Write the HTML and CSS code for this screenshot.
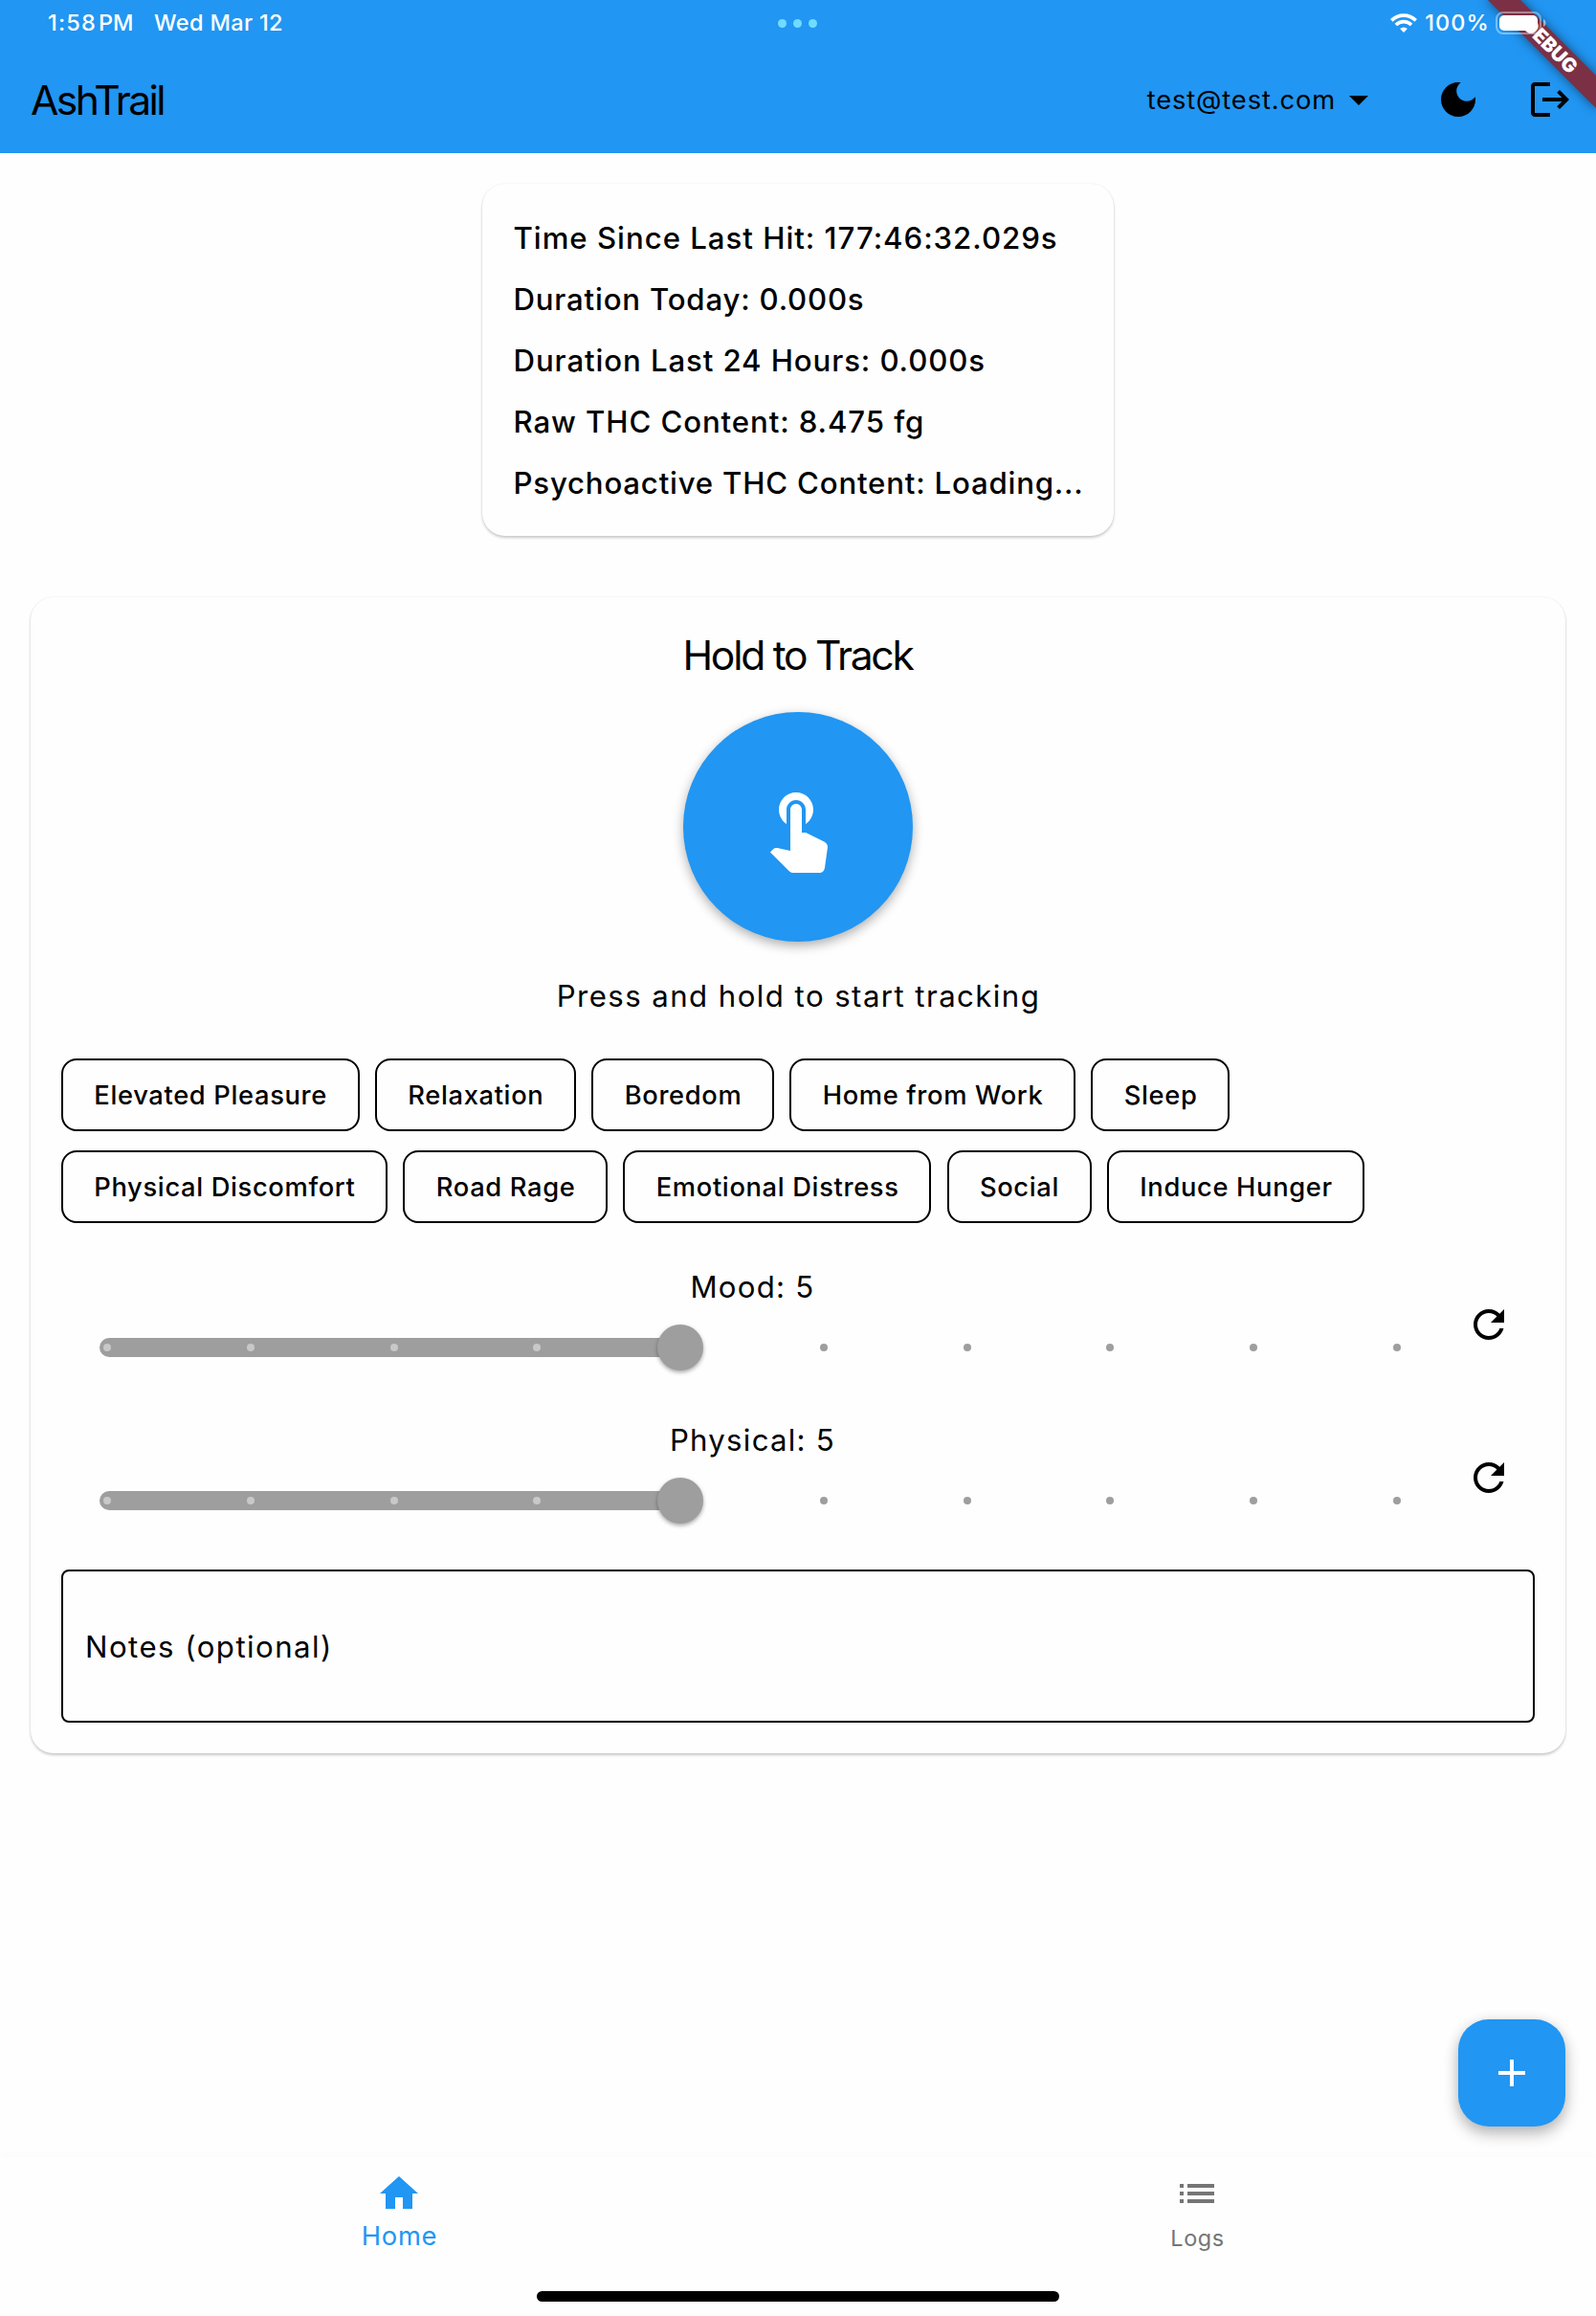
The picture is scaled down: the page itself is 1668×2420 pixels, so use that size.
FILE: index.html
```
<!DOCTYPE html>
<html lang="en">
<head>
<meta charset="utf-8">
<title>AshTrail</title>
<link rel="stylesheet" href="styles.css">
</head>
<body>
<header class="header">
  <div class="debug-banner">DEBUG</div>
  <div class="status">
    <div class="status-left"><span class="time">1:58</span><span class="meridiem">PM</span><span class="date">Wed Mar 12</span></div>
    <div class="dots"><i></i><i></i><i></i></div>
    <div class="status-right">
      <svg class="wifi" width="28" height="20" viewBox="0 0 28 20" fill="none" stroke="#fff" stroke-width="3.6">
        <path d="M1.3 7.4a18 18 0 0 1 25.4 0"/>
        <path d="M5.9 12a11.5 11.5 0 0 1 16.2 0"/>
        <path d="M14 20l-3.9-3.9a5.6 5.6 0 0 1 7.8 0z" fill="#fff" stroke="none"/>
      </svg>
      <span class="percent">100%</span>
      <svg width="53" height="24" viewBox="0 0 53 24">
        <rect x="1" y="1" width="46" height="22" rx="7" fill="none" stroke="#fff" stroke-opacity=".4" stroke-width="2"/>
        <rect x="4" y="4" width="40" height="16" rx="5" fill="#fff"/>
        <path d="M50 8c3.400 1.200 3.400 6.800 0 8z" fill="#fff" fill-opacity=".5"/>
      </svg>
    </div>
  </div>
  <div class="appbar">
    <h1 class="title">AshTrail</h1>
    <div class="account"><span>test@test.com</span><svg class="icon" viewBox="0 0 24 24"><path d="M7 10l5 5 5-5z"/></svg></div>
    <svg class="icon moon" viewBox="0 0 24 24"><path d="M12 3c-4.970 0-9 4.030-9 9s4.030 9 9 9 9-4.030 9-9c0-.46-.04-.92-.1-1.360-.98 1.370-2.580 2.260-4.400 2.260-2.980 0-5.400-2.420-5.400-5.400 0-1.810.89-3.420 2.260-4.400C12.920 3.040 12.460 3 12 3z"/></svg>
    <svg class="icon logout" viewBox="0 0 24 24"><path d="M17 7l-1.410 1.410L18.170 11H8v2h10.170l-2.580 2.580L17 17l5-5zM4 5h8V3H4c-1.100 0-2 .9-2 2v14c0 1.100.9 2 2 2h8v-2H4V5z"/></svg>
  </div>
</header>

<main class="content">
  <section class="card stats">
    <p class="stat-wide">Time Since Last Hit: 177:46:32.029s</p>
    <p>Duration Today: 0.000s</p>
    <p class="stat-mid">Duration Last 24 Hours: 0.000s</p>
    <p class="stat-mid">Raw THC Content: 8.475 fg</p>
    <p>Psychoactive THC Content: Loading...</p>
  </section>

  <section class="card tracker">
    <h2 class="tracker-title">Hold to Track</h2>
    <button class="hold" type="button" aria-label="Hold to track">
      <svg width="96" height="96" viewBox="0 0 24 24" fill="#fff"><path d="M9 11.240V7.500C9 6.120 10.120 5 11.500 5S14 6.120 14 7.500v3.740c1.210-.81 2-2.180 2-3.740C16 5.010 13.990 3 11.500 3S7 5.010 7 7.500c0 1.560.79 2.930 2 3.740zm9.840 4.630l-4.540-2.260c-.17-.07-.35-.11-.54-.11H13v-6c0-.83-.67-1.500-1.500-1.500S10 6.670 10 7.500v10.740l-3.430-.72c-.08-.01-.15-.03-.24-.03-.31 0-.59.13-.79.33l-.79.8 4.940 4.940c.27.27.65.44 1.060.44h6.790c.75 0 1.330-.55 1.440-1.280l.75-5.270c.01-.07.02-.14.02-.2 0-.62-.38-1.160-.91-1.380z"/></svg>
    </button>
    <p class="hint">Press and hold to start tracking</p>

    <div class="chips">
      <div class="chip-row">
        <span class="chip">Elevated Pleasure</span><span class="chip">Relaxation</span><span class="chip">Boredom</span><span class="chip">Home from Work</span><span class="chip">Sleep</span>
      </div>
      <div class="chip-row">
        <span class="chip">Physical Discomfort</span><span class="chip">Road Rage</span><span class="chip">Emotional Distress</span><span class="chip">Social</span><span class="chip">Induce Hunger</span>
      </div>
    </div>

    <div class="rating">
      <div class="rating-main">
        <p class="rating-label">Mood: 5</p>
        <div class="slider">
          <div class="track"></div>
          <div class="ticks"><i class="on"></i><i class="on"></i><i class="on"></i><i class="on"></i><i class="thumb"></i><i></i><i></i><i></i><i></i><i></i></div>
        </div>
      </div>
      <svg class="icon refresh" viewBox="0 0 24 24"><path d="M17.650 6.350C16.200 4.900 14.210 4 12 4c-4.420 0-7.990 3.580-7.990 8s3.570 8 7.990 8c3.730 0 6.840-2.550 7.730-6h-2.080c-.82 2.330-3.040 4-5.650 4-3.310 0-6-2.690-6-6s2.690-6 6-6c1.660 0 3.140.69 4.220 1.780L13 11h7V4l-2.350 2.350z"/></svg>
    </div>
    <div class="rating">
      <div class="rating-main">
        <p class="rating-label">Physical: 5</p>
        <div class="slider">
          <div class="track"></div>
          <div class="ticks"><i class="on"></i><i class="on"></i><i class="on"></i><i class="on"></i><i class="thumb"></i><i></i><i></i><i></i><i></i><i></i></div>
        </div>
      </div>
      <svg class="icon refresh" viewBox="0 0 24 24"><path d="M17.650 6.350C16.200 4.900 14.210 4 12 4c-4.420 0-7.990 3.580-7.990 8s3.570 8 7.990 8c3.730 0 6.840-2.550 7.730-6h-2.080c-.82 2.330-3.040 4-5.650 4-3.310 0-6-2.690-6-6s2.690-6 6-6c1.660 0 3.140.69 4.220 1.780L13 11h7V4l-2.350 2.350z"/></svg>
    </div>

    <div class="notes">Notes (optional)</div>
  </section>
</main>

<button class="fab" type="button" aria-label="Add">
  <svg class="icon" viewBox="0 0 24 24"><path d="M19 13h-6v6h-2v-6H5v-2h6V5h2v6h6z"/></svg>
</button>

<nav class="nav">
  <div class="tabs">
    <div class="tab active"><svg class="icon" viewBox="0 0 24 24"><path d="M10 20v-6h4v6h5v-8h3L12 3 2 12h3v8z"/></svg><span>Home</span></div>
    <div class="tab"><svg class="icon" viewBox="0 0 24 24"><path d="M3 13h2v-2H3v2zm0 4h2v-2H3v2zm0-8h2V7H3v2zm4 4h14v-2H7v2zm0 4h14v-2H7v2zM7 7v2h14V7H7z"/></svg><span>Logs</span></div>
  </div>
  <div class="home-indicator"></div>
</nav>
</body>
</html>
```
FILE: styles.css
```
* { box-sizing: border-box; margin: 0; padding: 0; }

body {
  position: relative;
  display: flex;
  flex-direction: column;
  width: 1668px;
  height: 2420px;
  overflow: hidden;
  background: #fefefe;
  color: #000;
  font-family: Inter, Roboto, "Liberation Sans", sans-serif;
}

button { border: 0; font: inherit; }
svg { display: block; flex: none; }
.icon { width: 48px; height: 48px; fill: currentColor; }

/* Header */
.header {
  position: relative;
  flex: none;
  height: 160px;
  overflow: hidden;
  background: #2196f3;
}
.status {
  position: relative;
  display: grid;
  grid-template-columns: 1fr auto 1fr;
  align-items: center;
  height: 48px;
  padding: 0 52px 0 50px;
  color: #fff;
  font-size: 23.5px;
  font-weight: 480;
}
.status-left, .status-right { display: flex; align-items: center; }
.status-left span, .percent { margin-top: -1px; }
.status-right { justify-content: flex-end; }
.time { letter-spacing: 1.2px; }
.meridiem { margin-left: 2px; }
.date { margin-left: 21.5px; letter-spacing: .35px; }
.dots { display: flex; gap: 7px; }
.dots i { width: 9px; height: 9px; border-radius: 50%; background: #6fdcff; }
.wifi { margin-right: 8px; }
.percent { margin-right: 6px; letter-spacing: 1.1px; }

.appbar {
  display: flex;
  align-items: center;
  height: 112px;
  padding: 0 24px 0 32px;
}
.title { font-size: 42.6px; font-weight: 380; letter-spacing: -2.6px; }
.account {
  display: flex;
  align-items: center;
  margin-left: auto;
  font-size: 27.3px;
  letter-spacing: .88px;
}
.moon { margin-left: 56px; }
.logout { margin-left: 48px; }

.debug-banner {
  position: absolute;
  top: 36px;
  left: 1540px;
  width: 160px;
  height: 24px;
  transform: rotate(45deg);
  background: #7b3045;
  box-shadow: 0 0 12px rgba(0, 0, 0, .5);
  color: #fff;
  font-size: 20.4px;
  font-weight: 900;
  line-height: 24px;
  text-align: center;
}

/* Content */
.content {
  display: flex;
  flex-direction: column;
  gap: 64px;
  padding: 32px;
}
.card {
  padding: 32px;
  border-radius: 24px;
  background: #fefefe;
  box-shadow: 0 2px 3px rgba(0, 0, 0, .2), 0 0 2px rgba(0, 0, 0, .08);
}
.stats {
  display: flex;
  flex-direction: column;
  gap: 16px;
  align-self: center;
  width: 660px;
  padding: 33px 32px 31px 32.5px;
  font-size: 31.2px;
  font-weight: 470;
  line-height: 48px;
  letter-spacing: .8px;
  white-space: nowrap;
}
.stat-wide { letter-spacing: .98px; }
.stat-mid { letter-spacing: .9px; }

.tracker { display: flex; flex-direction: column; }
.tracker-title {
  height: 56px;
  padding: 1px 1px 0 0;
  font-size: 42.6px;
  font-weight: 380;
  line-height: 56px;
  letter-spacing: -2.25px;
  text-align: center;
}
.hold {
  display: flex;
  align-items: center;
  justify-content: center;
  align-self: center;
  width: 240px;
  height: 240px;
  margin: 32px 0;
  border-radius: 50%;
  background: #2196f3;
  box-shadow: 0 4px 12px rgba(0, 0, 0, .32);
}
.hint {
  height: 48px;
  padding: 1px 0 0 1px;
  font-size: 31.2px;
  line-height: 48px;
  letter-spacing: 1.43px;
  text-align: center;
}

.chips {
  display: flex;
  flex-direction: column;
  gap: 20px;
  margin: 42px 0;
}
.chip-row { display: flex; gap: 16.3px; }
.chip {
  height: 76px;
  padding: 1px 31.7px 0 32.3px;
  border: 2px solid #000;
  border-radius: 16px;
  font-size: 27.3px;
  font-weight: 470;
  line-height: 72px;
  letter-spacing: .66px;
  white-space: nowrap;
}

.rating {
  display: flex;
  align-items: center;
  height: 128px;
  margin-bottom: 32px;
}
.rating-main { flex: 1; }
.rating-label {
  height: 48px;
  padding: 1px 0 0 1px;
  font-size: 31.2px;
  line-height: 48px;
  letter-spacing: 1.25px;
  text-align: center;
}
.refresh { margin: 0 24px; }
.slider { position: relative; height: 80px; padding: 0 44px; }
.track {
  position: absolute;
  top: 30px;
  left: 40px;
  width: 610px;
  height: 20px;
  border-radius: 10px;
  background: #9e9e9e;
}
.ticks {
  position: relative;
  display: flex;
  align-items: center;
  justify-content: space-between;
  height: 80px;
}
.ticks i { width: 8px; height: 8px; border-radius: 50%; background: #9e9e9e; }
.ticks .on { background: #c8c8c8; }
.ticks .thumb {
  width: 48px;
  height: 48px;
  margin: 0 -20px;
  box-shadow: 0 2px 4px rgba(0, 0, 0, .35);
}

.notes {
  height: 160px;
  padding: 1px 23px 0;
  border: 2px solid #000;
  border-radius: 8px;
  font-size: 31.2px;
  line-height: 156px;
  letter-spacing: 1.45px;
}

/* Floating button and bottom navigation */
.fab {
  position: absolute;
  top: 2110px;
  left: 1524px;
  display: flex;
  align-items: center;
  justify-content: center;
  width: 112px;
  height: 112px;
  border-radius: 32px;
  background: #2196f3;
  box-shadow: 0 8px 16px rgba(0, 0, 0, .24), 0 2px 14px rgba(0, 0, 0, .1);
  color: #fff;
}
.nav {
  display: flex;
  flex-direction: column;
  align-items: center;
  justify-content: space-between;
  height: 166px;
  margin-top: auto;
  padding: 14px 0 15px;
  background: #fefefe;
  box-shadow: 0 -2px 6px rgba(0, 0, 0, .02);
}
.tabs { display: flex; width: 100%; }
.tab {
  display: flex;
  flex: 1;
  flex-direction: column;
  align-items: center;
  color: #757575;
  font-size: 23.4px;
  line-height: 44px;
  letter-spacing: .6px;
}
.tab span { display: block; height: 44px; padding: 1px 0 0 1px; }
.active { color: #2196f3; font-size: 27.3px; letter-spacing: .8px; }
.active span { padding-top: 0; line-height: 42px; }
.home-indicator {
  width: 546px;
  height: 11px;
  border-radius: 6px;
  background: #000;
}
```
